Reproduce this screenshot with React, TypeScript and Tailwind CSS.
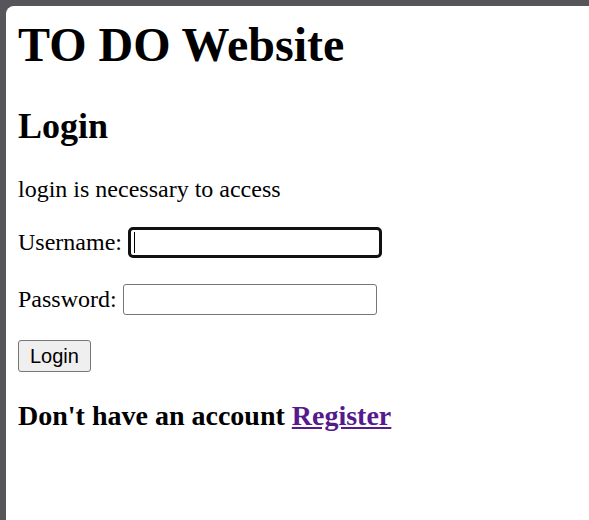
import React, { useState } from 'react';

const App = () => {
  const [username, setUsername] = useState('');
  const [password, setPassword] = useState('');

  return (
    <div className="min-h-screen w-full bg-[#55555a] pt-[6px] pl-[6px]">
      <div className="min-h-[514px] bg-white rounded-tl-[8px] px-[12px] pt-[12px] text-black font-['Liberation_Serif',serif]">
        <h1 className="text-[48px] leading-[53px] font-bold">TO DO Website</h1>

        <h2 className="mt-[35px] text-[36px] leading-[40px] font-bold">Login</h2>

        <p className="mt-[30px] text-[24px] leading-[27px]">login is necessary to access</p>

        <form onSubmit={(e) => e.preventDefault()}>
          <div className="mt-[24px] flex items-center gap-[6px]">
            <label className="text-[24px] leading-[27px]">Username:</label>
            <div className="relative">
              <input
                type="text"
                value={username}
                onChange={(e) => setUsername(e.target.value)}
                className="block w-[254px] h-[31px] px-[4px] border-[3px] border-[#111] rounded-[5px] bg-white text-[20px] font-['Liberation_Sans',sans-serif] outline-none"
              />
              {username === '' && (
                <span className="absolute left-[6px] top-[5px] w-[1px] h-[21px] bg-black" />
              )}
            </div>
          </div>

          <div className="mt-[26px] flex items-center gap-[6px]">
            <label className="text-[24px] leading-[27px]">Password:</label>
            <input
              type="password"
              value={password}
              onChange={(e) => setPassword(e.target.value)}
              className="block w-[254px] h-[31px] px-[4px] border border-[#767676] rounded-[3px] bg-white text-[20px] font-['Liberation_Sans',sans-serif] outline-none"
            />
          </div>

          <button
            type="submit"
            className="mt-[25px] block h-[32px] px-[11px] border border-[#767676] rounded-[3px] bg-[#efefef] text-[20px] leading-[30px] font-['Liberation_Sans',sans-serif] text-black"
          >
            Login
          </button>
        </form>

        <h3 className="mt-[28px] text-[28px] leading-[31px] font-bold">
          Don't have an account{' '}
          <a href="#" className="text-[#551a8b] underline">
            Register
          </a>
        </h3>
      </div>
    </div>
  );
};

export default App;
